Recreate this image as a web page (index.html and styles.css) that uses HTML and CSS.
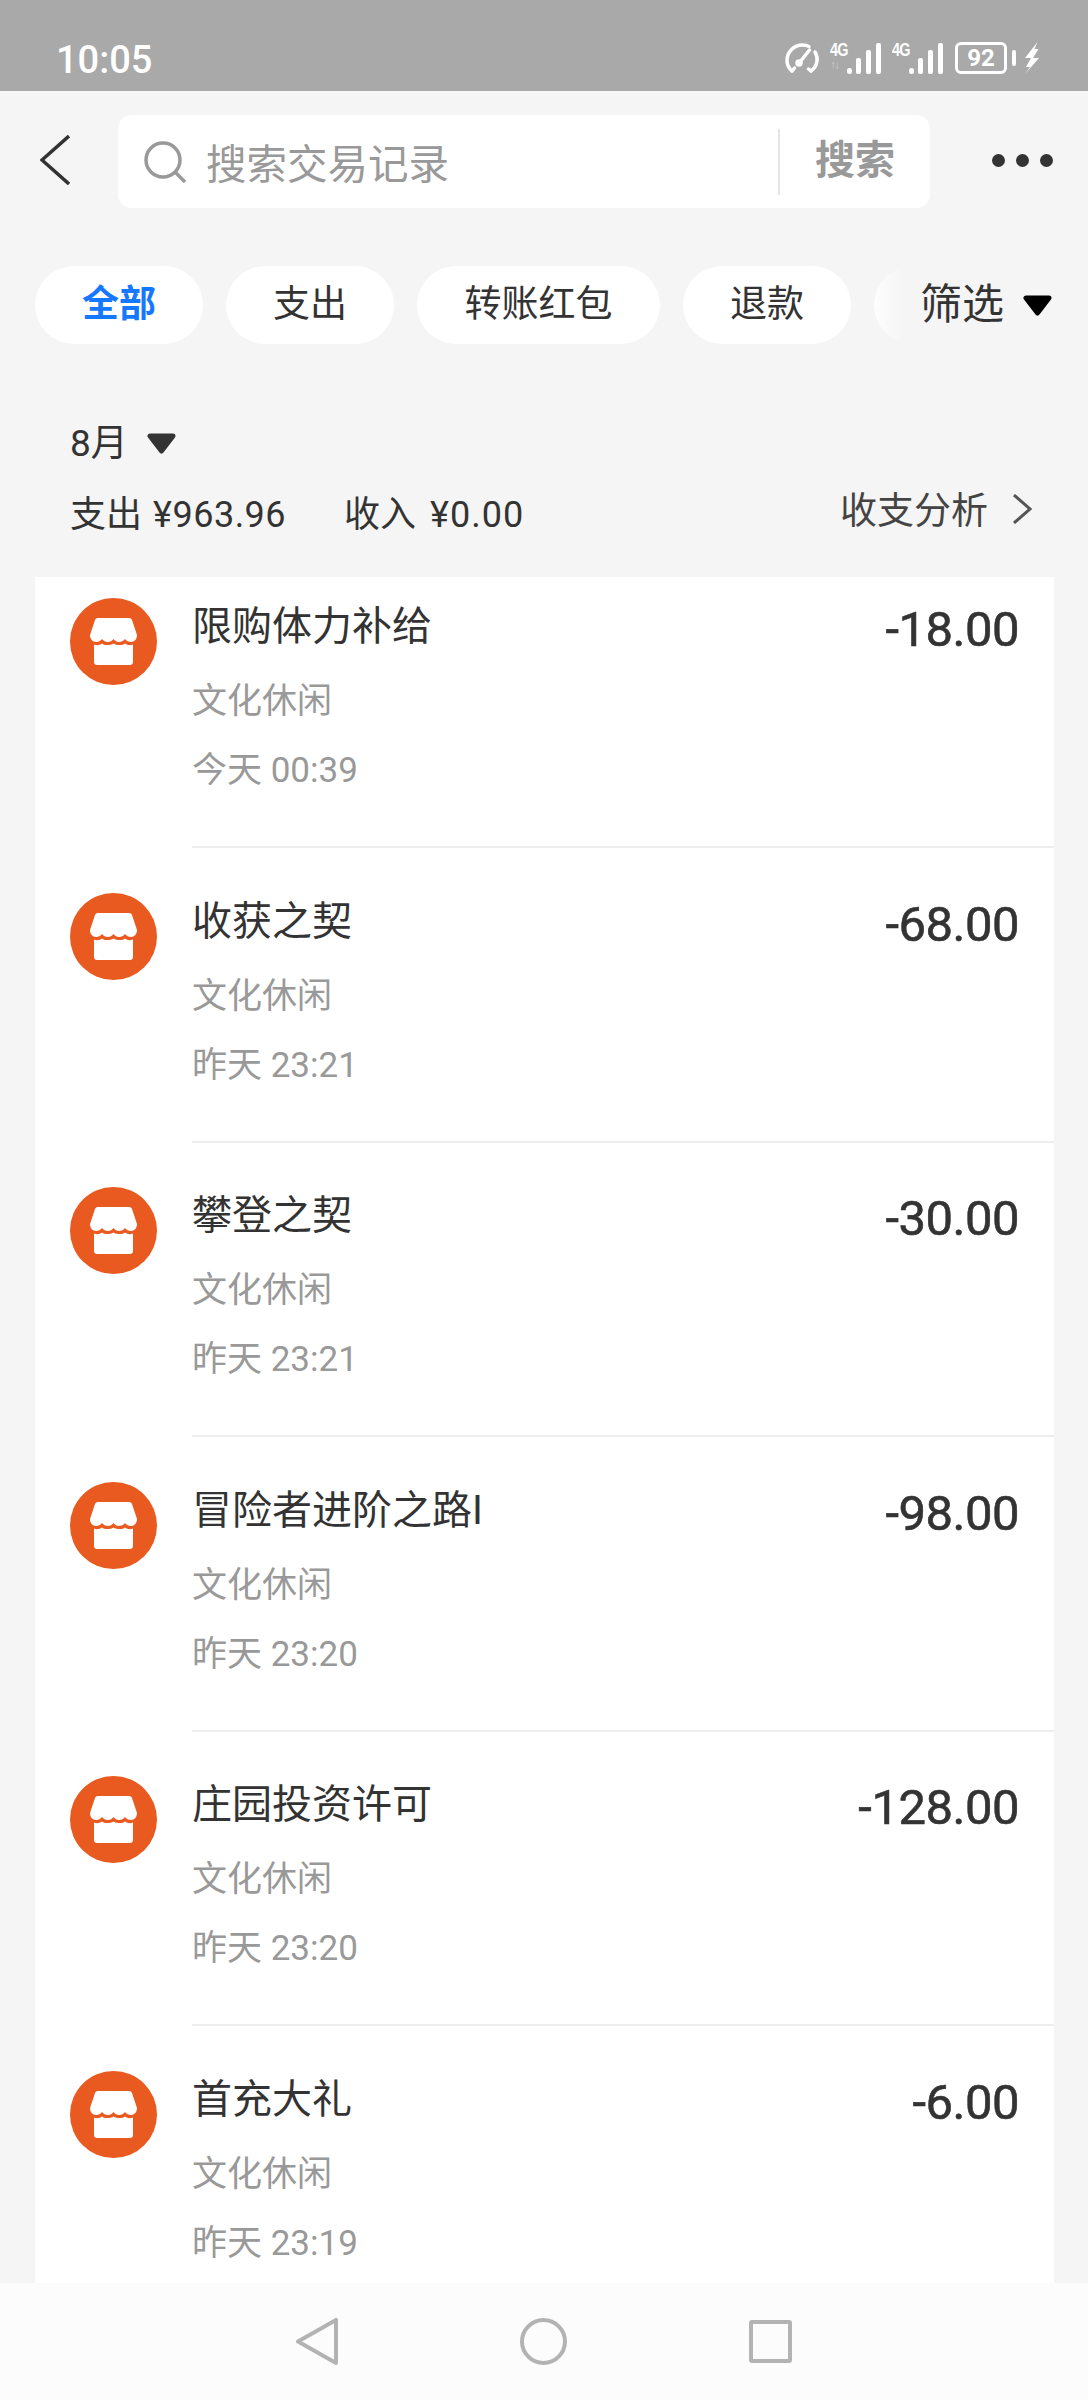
FILE: index.html
```html
<!DOCTYPE html>
<html lang="zh-CN">
  <head>
    <meta charset="utf-8"/>
    <title>交易记录</title>
    <link rel="stylesheet" href="styles.css">
  </head>

  <body>
    <svg class="defs" width="0" height="0">
      <symbol id="shop" viewBox="0 0 87 87">
        <circle cx="43.500" cy="43.500" r="43.500" fill="#e95a20"/>
        <path fill="#fff" d="M28 20H59C60.500 20 61.500 20.800 62 22L67 37C67 41 64.500 44 61 44C58.500 44 56.500 43 55 41C53.500 43 51.500 44 49 44C46.800 44 45 43 43.500 41C42 43 40.200 44 38 44C35.500 44 33.500 43 32 41C30.500 43 28.500 44 26 44C22.500 44 20 41 20 37L25 22C25.500 20.800 26.500 20 28 20Z"/>
        <path fill="#fff" d="M24 46.500C26.500 47.500 29.500 47.500 32 45.500C34.500 47.500 40 47.500 43.500 45.500C47 47.500 52.500 47.500 55 45.500C57.500 47.500 60.500 47.500 63 46.500V64C63 65.700 61.700 67 60 67H27C25.300 67 24 65.700 24 64Z"/>
      </symbol>
      <symbol id="signal" viewBox="0 0 34 31">
        <rect x="0" y="25" width="5" height="6" rx="2.500"/>
        <rect x="9" y="15" width="5" height="16" rx="2"/>
        <rect x="19" y="7" width="5" height="24" rx="2"/>
        <rect x="29" y="0" width="5" height="31" rx="2"/>
      </symbol>
      <symbol id="tri" viewBox="0 0 29 21">
        <path d="M3 3H26L14.500 18Z" stroke-width="5" stroke-linejoin="round"/>
      </symbol>
    </svg>

    <header class="statusbar">
      <span class="clock">10:05</span>
      <div class="status-icons">
        <svg class="gauge" width="36" height="32" viewBox="0 0 34 32" fill="none" stroke="#fff" stroke-width="3.500" stroke-linecap="round">
          <path d="M7 29C3.500 26 2 22.500 2 18.500C2 10 9 3 17.500 3C20 3 22 3.500 24 4.500"/>
          <path d="M30 10C31.500 12.500 32.500 15.500 32 19C31.500 23 29.500 26.500 26 29"/>
          <path d="M7 29L9.500 26M26 29L23.500 27"/>
          <path d="M15 20L24.500 8"/>
          <circle cx="14" cy="21" r="2" fill="#fff"/>
        </svg>
        <div class="sim">
          <span class="sim-type">4G</span>
          <span class="sim-arrows">↑↓</span>
        </div>
        <svg class="signal" width="34" height="31"><use href="#signal"/></svg>
        <div class="sim sim-second">
          <span class="sim-type">4G</span>
        </div>
        <svg class="signal" width="34" height="31"><use href="#signal"/></svg>
        <span class="battery">92</span>
        <span class="battery-cap"></span>
        <svg class="bolt" width="14" height="32" viewBox="0 0 14 32"><path fill="#fff" d="M12.500 0L0 16H6L1 25H5L0 32L14 16H8L13.500 7H9.500Z"/></svg>
      </div>
    </header>

    <section class="toolbar">
      <svg class="back" width="30" height="50" viewBox="0 0 30 50" fill="none" stroke="#333" stroke-width="3.500"><path d="M29 1L2 25L29 49"/></svg>
      <div class="search">
        <svg class="search-icon" width="42" height="42" viewBox="0 0 42 42" fill="none" stroke="#999" stroke-width="3.500"><circle cx="19" cy="19" r="17"/><path d="M31 31L41 41"/></svg>
        <span class="search-hint">搜索交易记录</span>
        <span class="search-btn">搜索</span>
      </div>
      <div class="more"><i></i><i></i><i></i></div>
    </section>

    <nav class="tabs">
      <span class="pill pill-on">全部</span>
      <span class="pill">支出</span>
      <span class="pill pill-wide">转账红包</span>
      <span class="pill">退款</span>
      <span class="pill"></span>
      <div class="filter">
        <span class="filter-text">筛选</span>
        <svg class="tri tri-black" width="29" height="21"><use href="#tri"/></svg>
      </div>
    </nav>

    <section class="summary">
      <div class="month"><span>8月</span><svg class="tri" width="29" height="21"><use href="#tri"/></svg></div>
      <div class="totals">
        <span class="total">支出<span class="money">¥963.96</span></span>
        <span class="total">收入<span class="money">¥0.00</span></span>
        <span class="analysis">收支分析</span>
        <svg class="chev" width="20" height="30" viewBox="0 0 20 30" fill="none" stroke="#555" stroke-width="3"><path d="M2 1L18 15L2 29"/></svg>
      </div>
    </section>

    <main class="listview">
      <ul class="list">
        <li class="row">
          <svg class="shop"><use href="#shop"/></svg>
          <div class="row-body">
            <div class="row-title">限购体力补给</div>
            <div class="row-sub">文化休闲</div>
            <div class="row-sub row-time">今天 00:39</div>
            <div class="amount">-18.00</div>
          </div>
        </li>
        <li class="row">
          <svg class="shop"><use href="#shop"/></svg>
          <div class="row-body">
            <div class="row-title">收获之契</div>
            <div class="row-sub">文化休闲</div>
            <div class="row-sub row-time">昨天 23:21</div>
            <div class="amount">-68.00</div>
          </div>
        </li>
        <li class="row">
          <svg class="shop"><use href="#shop"/></svg>
          <div class="row-body">
            <div class="row-title">攀登之契</div>
            <div class="row-sub">文化休闲</div>
            <div class="row-sub row-time">昨天 23:21</div>
            <div class="amount">-30.00</div>
          </div>
        </li>
        <li class="row">
          <svg class="shop"><use href="#shop"/></svg>
          <div class="row-body">
            <div class="row-title">冒险者进阶之路I</div>
            <div class="row-sub">文化休闲</div>
            <div class="row-sub row-time">昨天 23:20</div>
            <div class="amount">-98.00</div>
          </div>
        </li>
        <li class="row">
          <svg class="shop"><use href="#shop"/></svg>
          <div class="row-body">
            <div class="row-title">庄园投资许可</div>
            <div class="row-sub">文化休闲</div>
            <div class="row-sub row-time">昨天 23:20</div>
            <div class="amount">-128.00</div>
          </div>
        </li>
        <li class="row">
          <svg class="shop"><use href="#shop"/></svg>
          <div class="row-body">
            <div class="row-title">首充大礼</div>
            <div class="row-sub">文化休闲</div>
            <div class="row-sub row-time">昨天 23:19</div>
            <div class="amount">-6.00</div>
          </div>
        </li>
      </ul>
    </main>

    <footer class="navbar">
      <svg width="42" height="47" viewBox="0 0 42 47" fill="none" stroke="#b3b3b3" stroke-width="4" stroke-linejoin="round"><path d="M40 2V45L2 23.500Z"/></svg>
      <svg width="47" height="47" viewBox="0 0 47 47" fill="none" stroke="#b3b3b3" stroke-width="4"><circle cx="23.500" cy="23.500" r="21.500"/></svg>
      <svg width="43" height="43" viewBox="0 0 43 43" fill="none" stroke="#b3b3b3" stroke-width="4" stroke-linejoin="round"><rect x="2" y="2" width="39" height="39" rx="1"/></svg>
    </footer>
  </body>
</html>
```

FILE: styles.css
```css
* {
  box-sizing: border-box;
}

body {
  margin: 0;
  width: 1088px;
  height: 2400px;
  overflow: hidden;
  display: flex;
  flex-direction: column;
  background-color: #f5f5f5;
  color: #333;
  font-family: Roboto, "Noto Sans CJK SC", sans-serif;
}

.defs {
  position: absolute;
}

/* status bar */
.statusbar {
  flex: 0 0 91px;
  display: flex;
  align-items: flex-start;
  justify-content: space-between;
  padding: 37px 49px 0 56px;
  background-color: #a9a9a9;
  color: #fff;
}

.clock {
  font-size: 38px;
  font-weight: 500;
  line-height: 46px;
}

.status-icons {
  display: flex;
  align-items: flex-start;
  margin-top: 5px;
  height: 32px;
}

.gauge {
  margin-right: 10px;
}

.sim {
  width: 17px;
  display: flex;
  flex-direction: column;
}

.sim-second {
  margin-left: 11px;
}

.sim-type {
  font: 700 18px/16px "Liberation Sans", sans-serif;
  letter-spacing: -1px;
  transform: scaleX(.8);
  transform-origin: left;
}

.sim-arrows {
  font: 700 12px/14px "Liberation Sans", sans-serif;
  color: #ccc;
  letter-spacing: -2px;
}

.signal {
  fill: #fff;
  margin-top: 1px;
}

.battery {
  width: 52px;
  height: 32px;
  margin-left: 12px;
  border: 3px solid #fff;
  border-radius: 6px;
  font: 700 24px/26px Roboto, sans-serif;
  text-align: center;
}

.battery-cap {
  width: 4px;
  height: 16px;
  margin: 8px 0 0 5px;
  border-radius: 2px;
  background-color: #fff;
}

.bolt {
  margin-left: 9px;
}

/* search row */
.toolbar {
  flex: 0 0 139px;
  display: flex;
  align-items: flex-start;
  padding: 24px 0 0 40px;
}

.back {
  margin: 20px 48px 0 0;
}

.search {
  width: 812px;
  height: 93px;
  display: flex;
  align-items: center;
  padding-left: 26px;
  border-radius: 14px;
  background-color: #fff;
}

.search-icon {
  margin-right: 20px;
}

.search-hint {
  flex: 1;
  font-size: 40.500px;
  color: #999;
}

.search-btn {
  width: 152px;
  height: 66px;
  border-left: 2px solid #e5e5e5;
  padding-left: 35px;
  font-size: 40px;
  font-weight: 700;
  line-height: 64px;
  color: #999;
}

.more {
  display: flex;
  gap: 11px;
  margin: 39px 0 0 62px;
}

.more i {
  width: 13px;
  height: 13px;
  border-radius: 50%;
  background-color: #333;
}

/* filter pills */
.tabs {
  flex: 0 0 78px;
  display: flex;
  gap: 23px;
  padding-left: 35px;
  margin-top: 36px;
  position: relative;
  overflow: hidden;
}

.pill {
  flex: 0 0 168px;
  border-radius: 39px;
  background-color: #fff;
  font-size: 37px;
  line-height: 78px;
  text-align: center;
}

.pill-wide {
  flex-basis: 243px;
}

.pill-on {
  color: #1677ff;
  font-weight: 700;
}

.filter {
  position: absolute;
  top: 0;
  right: 0;
  bottom: 0;
  width: 215px;
  display: flex;
  align-items: center;
  padding-left: 47px;
  gap: 19px;
  background: linear-gradient(to right, rgba(245, 245, 245, .1), #f5f5f5 30px);
}

.filter-text {
  font-size: 42px;
  margin-top: -10px;
}

.tri {
  display: block;
  fill: #333;
  stroke: #333;
}

.tri-black {
  fill: #000;
  stroke: #000;
}

/* month summary */
.summary {
  flex: 0 0 233px;
  padding: 72px 57px 0 70px;
}

.month {
  display: flex;
  align-items: center;
  gap: 19px;
  height: 48px;
  font-size: 37px;
}

.month .tri {
  margin-top: 6px;
}

.totals {
  display: flex;
  align-items: center;
  margin-top: 22px;
  height: 50px;
  font-size: 36px;
}

.total {
  margin-right: 58px;
}

.money {
  margin-left: 11px;
  letter-spacing: .5px;
}

.total + .total .money {
  margin-left: 14px;
  letter-spacing: 1px;
}

.analysis {
  margin-left: auto;
  font-size: 37px;
  color: #444;
  margin-top: -6px;
}

.chev {
  margin: -4px -1px 0 24px;
}

/* transaction list */
.listview {
  flex: 1;
  min-height: 0;
  margin: 0 34px 0 35px;
  overflow: hidden;
  background-color: #fff;
}

.list {
  list-style: none;
  margin: -24px 0 0;
  padding: 0;
}

.row {
  height: 294.500px;
  display: flex;
  padding: 45px 0 0 35px;
  position: relative;
}

.shop {
  flex: none;
  width: 87px;
  height: 87px;
  margin-right: 35px;
}

.row-body {
  flex: 1;
  height: 250px;
  position: relative;
  border-bottom: 2px solid #eee;
}

.row-title {
  font-size: 40px;
  line-height: 58px;
}

.row-sub {
  font-size: 35px;
  line-height: 50px;
  margin-top: 21px;
  color: #999;
}

.row-time {
  margin-top: 19px;
}

.amount {
  position: absolute;
  top: 3px;
  right: 35px;
  font-size: 49px;
  letter-spacing: -.5px;
  -webkit-text-stroke: .6px #333;
  line-height: 58px;
}

/* nav keys */
.navbar {
  flex: 0 0 117px;
  display: flex;
  align-items: center;
  gap: 182px;
  padding-left: 296px;
  background-color: #fcfcfc;
}
```
